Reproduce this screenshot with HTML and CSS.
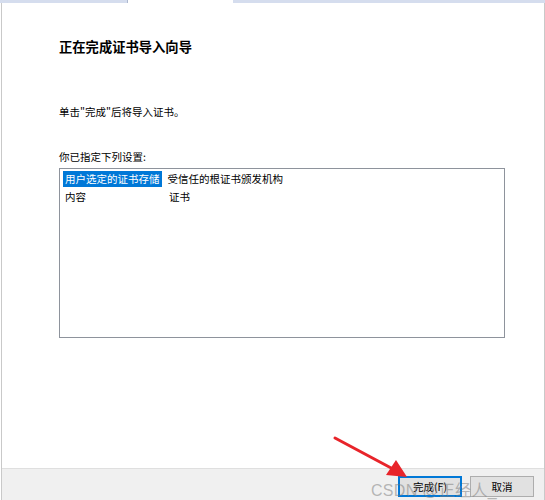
FILE: index.html
```html
<!DOCTYPE html>
<html lang="zh-CN">
<head>
<meta charset="utf-8">
<link rel="stylesheet" href="styles.css">
</head>
<body>
<div class="tabs">
  <div class="tab tab-a"></div>
  <div class="tab tab-b"></div>
  <div class="tab tab-c"></div>
</div>
<div class="window">
  <div class="content">
    <h1 class="title">正在完成证书导入向导</h1>
    <p class="hint">单击"完成"后将导入证书。</p>
    <p class="label">你已指定下列设置:</p>
    <div class="listbox">
      <div class="row">
        <span class="cell key selected">用户选定的证书存储</span>
        <span class="cell val">受信任的根证书颁发机构</span>
      </div>
      <div class="row">
        <span class="cell key">内容</span>
        <span class="cell val">证书</span>
      </div>
    </div>
  </div>
  <div class="footer">
    <button class="btn primary">完成(F)</button>
    <button class="btn">取消</button>
  </div>
  <svg class="arrow" width="100" height="60" viewBox="0 0 100 60">
    <line x1="4" y1="6" x2="62" y2="37" stroke="#e8242a" stroke-width="3" stroke-linecap="round"/>
    <polygon points="76,45 55,43 65,28" fill="#e8242a"/>
  </svg>
  <div class="watermark">CSDN @正经人_</div>
</div>
</body>
</html>
```
FILE: styles.css
```css
html, body {
  margin: 0;
  padding: 0;
  background: #ffffff;
}
body {
  width: 545px;
  height: 500px;
  overflow: hidden;
  font-family: "Noto Sans CJK SC", "Noto Sans", "Liberation Sans", sans-serif;
  font-size: 10.5px;
  color: #000;
}
.tabs {
  display: flex;
  height: 3px;
}
.tab-a {
  width: 128px;
  background: #d5ddee;
  border-right: 1px solid #aeb9cf;
  box-sizing: border-box;
}
.tab-b {
  width: 105px;
  background: #ffffff;
}
.tab-c {
  flex: 1;
  background: #d5ddee;
}
.window {
  position: relative;
  height: 497px;
  display: flex;
  flex-direction: column;
  border-left: 1px solid #c9c9c9;
  border-right: 1px solid #c9c9c9;
  margin-left: 1px;
}
.content {
  flex: 1;
  padding: 0 0 0 57px;
}
.title {
  margin: 34px 0 0;
  font-size: 13.3px;
  font-weight: bold;
  line-height: 20px;
}
.hint {
  margin: 46px 0 0;
  line-height: 18px;
}
.label {
  margin: 27px 0 0;
  line-height: 18px;
}
.listbox {
  margin-top: 2px;
  width: 446px;
  height: 170px;
  box-sizing: border-box;
  border: 1px solid #8e939c;
  padding: 2px 3px;
}
.row {
  display: flex;
  height: 18px;
  line-height: 16px;
}
.cell {
  display: block;
  white-space: nowrap;
}
.key {
  width: 100px;
  box-sizing: border-box;
  height: 16px;
  margin-right: 6px;
  padding: 0 2px;
}
.key.selected {
  width: auto;
  margin-right: 6px;
  padding: 0 2px 0 2px;
}
.selected {
  background: #0078d7;
  color: #ffffff;
}
.footer {
  height: 32px;
  flex: none;
  background: #f0f0f0;
  border-top: 1px solid #dfdfdf;
  display: flex;
  justify-content: flex-end;
  align-items: flex-start;
  gap: 8px;
  padding: 7px 10px 0 0;
  box-sizing: border-box;
}
.btn {
  width: 64px;
  height: 21px;
  box-sizing: border-box;
  font-family: inherit;
  font-size: 10.5px;
  line-height: 17px;
  padding: 0;
  background: #e1e1e1;
  border: 1px solid #adadad;
  color: #000;
}
.btn.primary {
  border: 2px solid #0078d7;
}
.arrow {
  position: absolute;
  left: 329px;
  top: 429px;
}
.watermark {
  position: absolute;
  left: 369px;
  top: 474px;
  font-family: "Liberation Sans", "Noto Sans CJK SC", sans-serif;
  font-size: 16px;
  color: rgba(120, 120, 120, 0.5);
  letter-spacing: 0.3px;
  pointer-events: none;
}
```
